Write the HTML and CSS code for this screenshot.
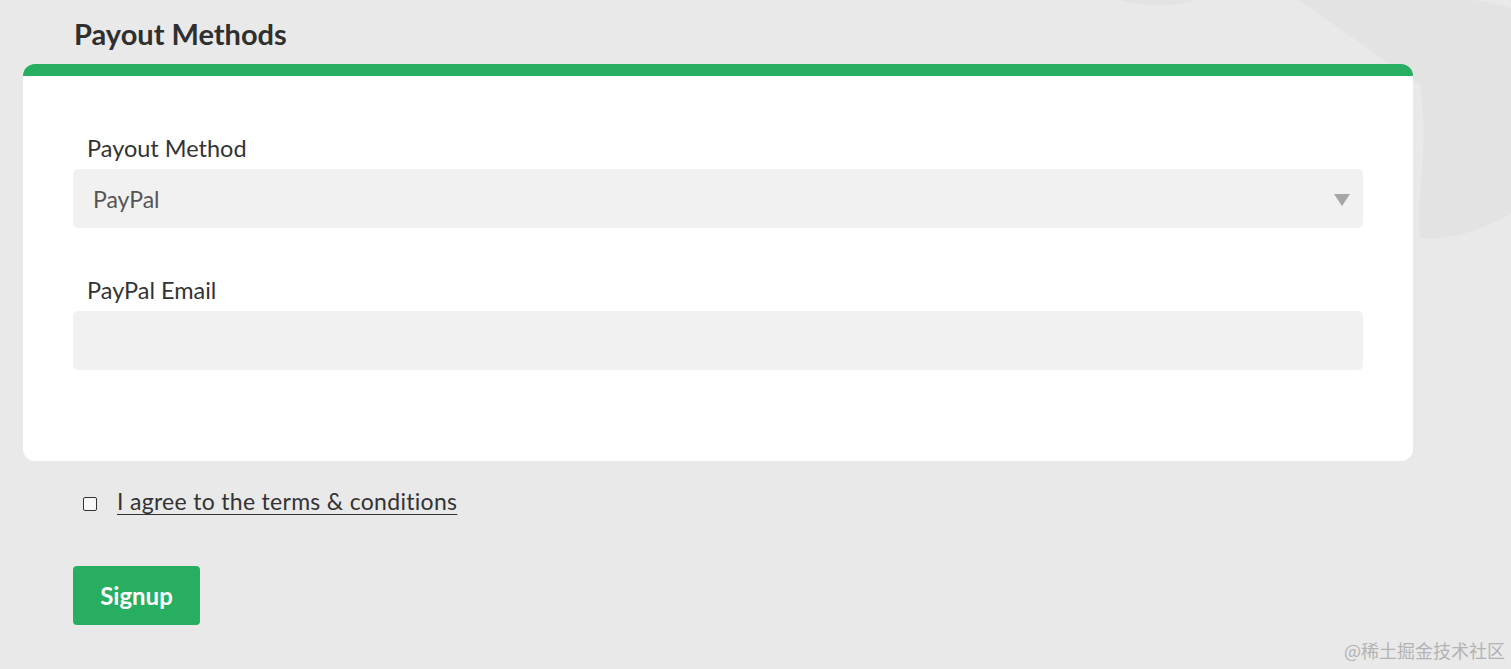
FILE: index.html
```html
<!DOCTYPE html>
<html lang="en">
<head>
<meta charset="utf-8">
<title>Payout Methods</title>
<link rel="stylesheet" href="styles.css">
</head>
<body>
<svg class="bg-deco" width="1511" height="669" viewBox="0 0 1511 669" aria-hidden="true">
  <path d="M1299,0 C1330,22 1370,50 1420,85 C1430,150 1415,200 1420,238 C1450,242 1485,228 1511,214 L1511,8 C1495,4 1480,0 1470,0 Z" fill="#e3e3e3"/>
  <path d="M1120,0 C1140,7 1175,7 1195,0 Z" fill="#e3e3e3"/>
</svg>
<main class="page">
  <h1 class="section-title">Payout Methods</h1>
  <section class="card">
    <div class="field">
      <label class="field-label" for="method">Payout Method</label>
      <div class="select-box">
        <span class="select-value">PayPal</span>
        <span class="select-arrow"></span>
      </div>
    </div>
    <div class="field field-second">
      <label class="field-label" for="email">PayPal Email</label>
      <div class="input-box" id="email"></div>
    </div>
  </section>
  <div class="agree-row">
    <span class="checkbox"></span>
    <a class="agree-link" href="#">I agree to the terms &amp; conditions</a>
  </div>
  <button class="signup-btn" type="button">Signup</button>
</main>
<div class="watermark">@稀土掘金技术社区</div>
</body>
</html>
```
FILE: styles.css
```css
html, body {
  margin: 0;
  padding: 0;
}
body {
  background: #e9e9e9;
  font-family: "Lato", "Open Sans", sans-serif;
  color: #333;
  width: 1511px;
  height: 669px;
  overflow: hidden;
  position: relative;
}
.bg-deco {
  position: absolute;
  left: 0;
  top: 0;
  z-index: 0;
}
.page {
  position: relative;
  z-index: 1;
  padding-left: 23px;
  width: 1390px;
}
.section-title {
  margin: 0;
  height: 64px;
  padding-left: 51px;
  font-size: 29px;
  font-weight: 700;
  line-height: 34px;
  color: #2f2f2f;
  box-sizing: border-box;
  display: flex;
  align-items: center;
  padding-top: 4px;
}
.card {
  background: #fff;
  border-top: 12px solid #27ae60;
  border-radius: 12px;
  padding: 60px 50px 91px 50px;
}
.field {
  display: flex;
  flex-direction: column;
}
.field-second {
  margin-top: 50px;
}
.field-label {
  padding-left: 14px;
  font-size: 23.5px;
  line-height: 24px;
  height: 24px;
  margin-bottom: 9px;
  color: #333;
}
.select-box,
.input-box {
  height: 59px;
  background: #f1f1f1;
  border-radius: 5px;
  box-sizing: border-box;
}
.select-box {
  display: flex;
  align-items: center;
  justify-content: space-between;
  padding: 0 13px 0 20px;
}
.select-value {
  font-size: 23px;
  color: #555;
}
.select-arrow {
  width: 0;
  height: 0;
  border-left: 8px solid transparent;
  border-right: 8px solid transparent;
  border-top: 12px solid #a5a5a5;
  margin-top: 2px;
}
.agree-row {
  display: flex;
  align-items: center;
  padding-left: 60px;
  margin-top: 28px;
  height: 24px;
}
.checkbox {
  width: 12px;
  height: 12px;
  border: 1px solid #333;
  border-radius: 2px;
  background: #f8f8f8;
  margin-top: 5px;
}
.agree-link {
  margin-left: 20px;
  font-size: 23px;
  letter-spacing: 0.3px;
  color: #333;
  text-decoration: underline;
  text-underline-offset: 4px;
  text-decoration-thickness: 1px;
}
.signup-btn {
  display: block;
  margin: 53px 0 0 50px;
  width: 127px;
  height: 59px;
  background: #27ae60;
  color: #fff;
  border: none;
  border-radius: 4px;
  font-family: "Lato", sans-serif;
  font-size: 24px;
  font-weight: 700;
  padding: 0;
}
.watermark {
  position: absolute;
  right: 6px;
  bottom: 6px;
  font-family: "Noto Sans CJK SC", sans-serif;
  font-size: 18px;
  color: #b3b3b3;
  z-index: 1;
}
```
